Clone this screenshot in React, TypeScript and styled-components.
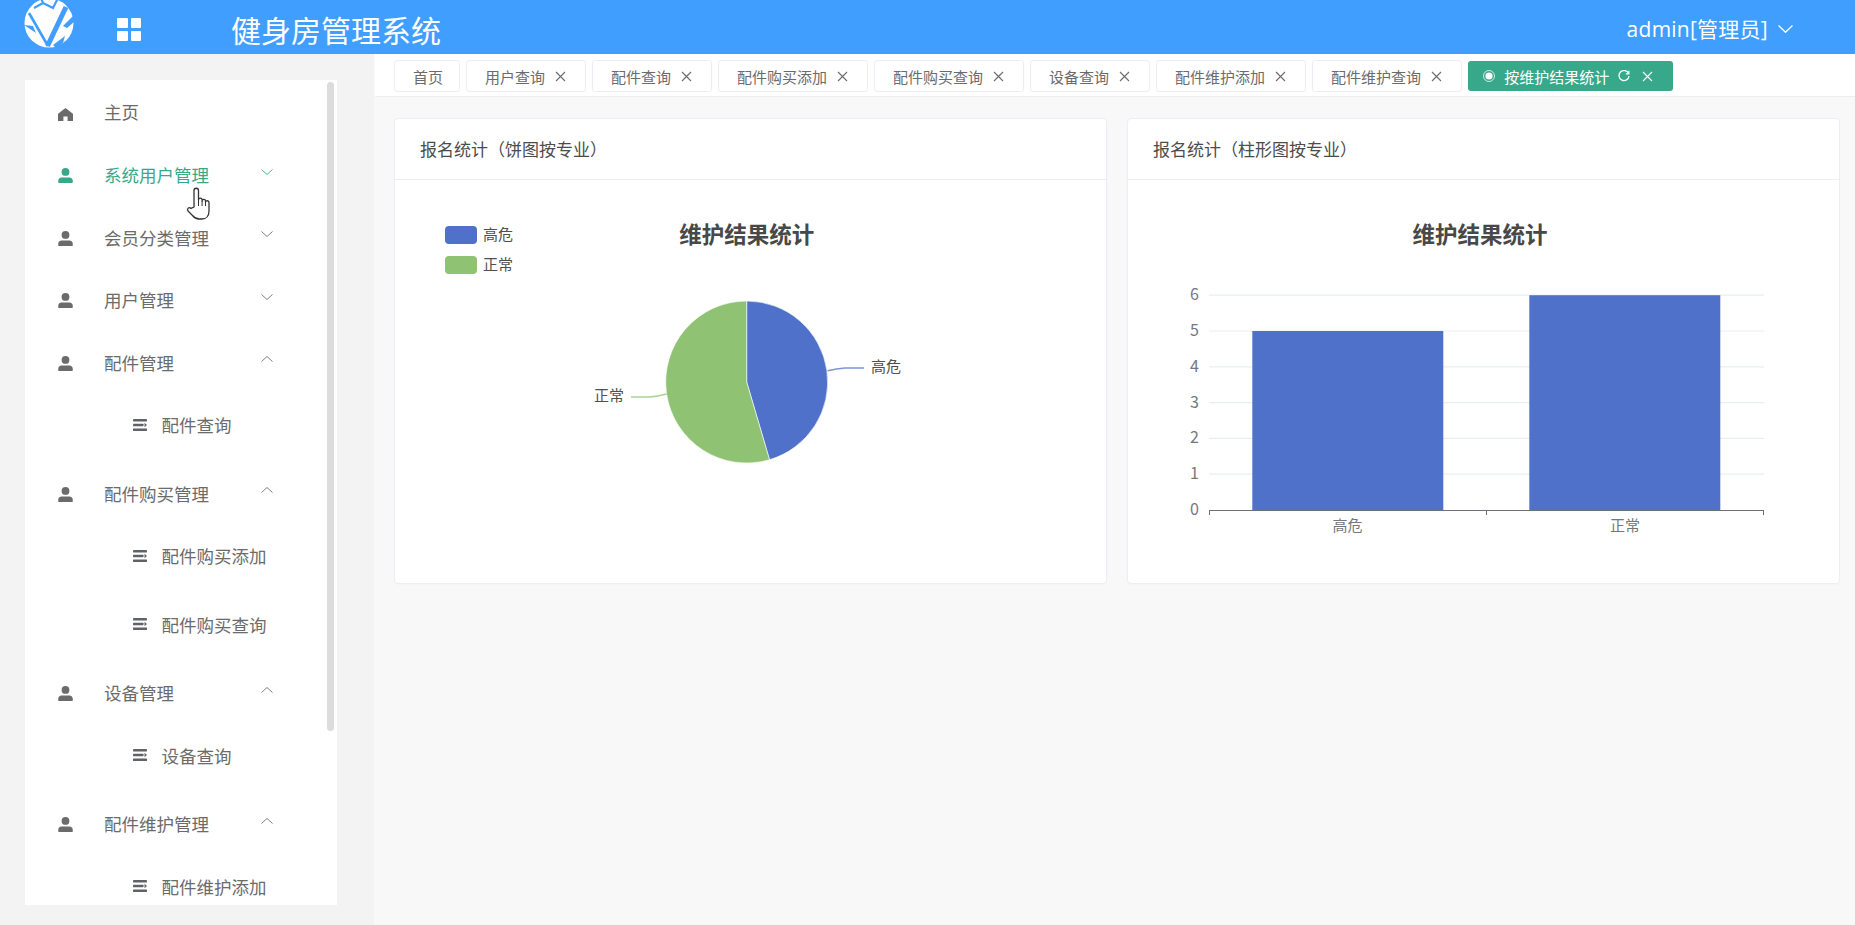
import React from "react";
import styled, { createGlobalStyle } from "styled-components";

const FONT = `"Noto Sans CJK SC", "Noto Sans", sans-serif`;
const TEAL = "#37a98a";

const Global = createGlobalStyle`
  html, body { margin: 0; padding: 0; height: 925px; overflow: hidden; background: #f8f8f8; }
  body { font-family: ${FONT}; }
  * { box-sizing: border-box; }
`;

const Page = styled.div`
  width: 1855px;
  height: 925px;
  display: grid;
  grid-template-rows: 54px 1fr;
  overflow: hidden;
  position: relative;
`;

/* ---------- header ---------- */
const Header = styled.header`
  background: #409eff;
  color: #fff;
  display: flex;
  align-items: center;
  padding: 0 62px 0 20px;
`;
const LogoSvg = styled.svg`
  width: 60px;
  height: 54px;
  flex: none;
`;
const GridIcon = styled.div`
  width: 24px;
  height: 23px;
  margin: 5px 0 0 37px;
  display: grid;
  grid-template-columns: 1fr 1fr;
  gap: 3px;
  flex: none;
`;
const GridCell = styled.span`
  background: #fff;
  border-radius: 1px;
`;
const AppTitle = styled.h1`
  margin: 4px 0 0 90px;
  font-size: 30px;
  font-weight: 400;
  line-height: 1;
  white-space: nowrap;
`;
const UserBox = styled.div`
  margin-left: auto;
  display: flex;
  align-items: center;
  gap: 10px;
  font-size: 21px;
  line-height: 1;
  padding-top: 4px;
`;
const UserName = styled.span`
  font-family: "Open Sans", ${FONT};
  letter-spacing: 0.25px;
`;

/* ---------- layout ---------- */
const Body = styled.div`
  display: grid;
  grid-template-columns: 375px 1fr;
  min-height: 0;
`;
const Aside = styled.aside`
  background: #f3f3f3;
  border-right: 1px solid #fafafa;
  padding: 26px 37px 20px 25px;
  min-height: 0;
`;
const MenuCard = styled.nav`
  position: relative;
  background: #fff;
  height: 825px;
  overflow: hidden;
  padding-top: 3.5px;
`;
const ScrollThumb = styled.div`
  position: absolute;
  left: 302px;
  top: 2px;
  width: 7px;
  height: 649px;
  border-radius: 4px;
  background: #dcdcdc;
`;
const MenuRow = styled.div<{ $active?: boolean; $home?: boolean }>`
  height: ${(p) => (p.$home ? "61px" : "62.5px")};
  display: grid;
  grid-template-columns: 33px 15px 31px 157px 12px;
  align-items: center;
  font-size: 17.5px;
  color: ${(p) => (p.$active ? TEAL : "#6b6b6b")};
  white-space: nowrap;
`;
const RowIcon = styled.svg<{ $dark?: boolean }>`
  grid-column: 2;
  width: 15px;
  height: 15px;
  fill: currentColor;
`;
const RowLabel = styled.span<{ $up?: number }>`
  grid-column: 4;
  margin-top: ${(p) => -(p.$up ?? 2)}px;
`;
const RowChevron = styled.svg`
  grid-column: 5;
  width: 12px;
  height: 6px;
  margin-top: -8px;
  fill: none;
  stroke: currentColor;
  stroke-width: 1;
  opacity: 0.85;
`;
const SubRow = styled.div`
  height: 68.5px;
  padding: 0 0 8.5px 108px;
  display: flex;
  align-items: center;
  gap: 14.5px;
  font-size: 17.5px;
  color: #6b6b6b;
  white-space: nowrap;
`;
const SubIcon = styled.svg`
  width: 14px;
  height: 12px;
  fill: #5f6368;
  flex: none;
`;
const Cursor = styled.svg`
  position: absolute;
  left: 180px;
  top: 180px;
  width: 40px;
  height: 45px;
`;

/* ---------- main ---------- */
const Main = styled.main`
  min-width: 0;
  background: #f8f8f8;
`;
const TabBar = styled.div`
  height: 43px;
  background: #fff;
  border-bottom: 1px solid #eeeeee;
  display: flex;
  align-items: flex-start;
  gap: 6px;
  padding: 6px 0 0 19px;
`;
const Tab = styled.div<{ $active?: boolean; $plain?: boolean }>`
  display: flex;
  align-items: center;
  flex: none;
  height: ${(p) => (p.$active ? "30px" : "32px")};
  margin-top: ${(p) => (p.$active ? "1px" : "0")};
  padding: ${(p) => (p.$active ? "0 20px 0 15px" : p.$plain ? "0 16px 0 18px" : "0 19px 0 18px")};
  border: ${(p) => (p.$active ? "none" : "1px solid #e9edf3")};
  border-radius: 3px;
  background: ${(p) => (p.$active ? TEAL : "#fff")};
  color: ${(p) => (p.$active ? "#fff" : "#6b6b6b")};
  font-size: 15px;
  white-space: nowrap;
`;
const TabClose = styled.svg<{ $ml?: number }>`
  width: 11px;
  height: 11px;
  margin-left: ${(p) => p.$ml ?? 10}px;
  fill: none;
  stroke: currentColor;
  stroke-width: 1.1;
  flex: none;
`;
const TabDot = styled.svg`
  width: 12px;
  height: 12px;
  margin-right: 9px;
  flex: none;
`;
const TabRefresh = styled.svg`
  width: 12px;
  height: 12px;
  margin-left: 9px;
  fill: none;
  stroke: currentColor;
  stroke-width: 1.3;
  flex: none;
`;
const CardGrid = styled.div`
  display: grid;
  grid-template-columns: 1fr 1fr;
  gap: 20px;
  padding: 21px 15px 0 19px;
`;
const Card = styled.section`
  height: 466px;
  background: #fff;
  border: 1px solid #ebeef5;
  border-radius: 4px;
  box-shadow: 0 1px 3px rgba(0, 0, 0, 0.02);
`;
const CardHead = styled.div`
  height: 61px;
  border-bottom: 1px solid #ebeef5;
  padding: 0 25px 2px;
  display: flex;
  align-items: center;
  font-size: 17px;
  color: #4c4c4c;
`;
const ChartSvg = styled.svg`
  display: block;
  width: 100%;
  height: 402px;
  font-family: ${FONT};
`;
const ChartTitle = styled.text`
  font-size: 22.5px;
  font-weight: 700;
  fill: #484848;
  text-anchor: middle;
  dominant-baseline: central;
`;
const ChartLabel = styled.text<{ $anchor?: string; $axis?: boolean; $size?: number }>`
  font-size: ${(p) => p.$size ?? 15}px;
  fill: ${(p) => (p.$axis ? "#75777f" : "#505050")};
  text-anchor: ${(p) => p.$anchor ?? "start"};
  dominant-baseline: central;
`;

/* ---------- icons ---------- */
const Person = () => (
  <RowIcon viewBox="0 0 15 15">
    <circle cx="7.5" cy="3.9" r="3.9" />
    <path d="M0.2 13.2c0-2.2 1.4-3.6 3.4-3.6h7.8c2 0 3.4 1.4 3.4 3.6v.8c0 .6-.4 1-1 1H1.2c-.6 0-1-.4-1-1z" />
  </RowIcon>
);
const Home = () => (
  <RowIcon viewBox="0 0 15 15">
    <path d="M7.5 1L14.6 6.6c.3.2.4.5.4.8V14H9.6V9.6H5.4V14H0V7.4c0-.3.1-.6.4-.8z" />
  </RowIcon>
);
const Chevron = ({ up }: { up?: boolean }) => (
  <RowChevron viewBox="0 0 12 6">
    <polyline points={up ? "0.5,5.5 6,0.5 11.5,5.5" : "0.5,0.5 6,5.5 11.5,0.5"} />
  </RowChevron>
);
const Bars = () => (
  <SubIcon viewBox="0 0 14 12">
    <rect x="0" y="0" width="14" height="2.4" rx="0.4" />
    <rect x="0" y="4.8" width="10.5" height="2.4" rx="0.4" />
    <path d="M11.5 3.8L14 6l-2.5 2.2z" />
    <rect x="0" y="9.6" width="14" height="2.4" rx="0.4" />
  </SubIcon>
);
const Logo = () => (
  <LogoSvg viewBox="0 0 60 54">
    <circle cx="29" cy="23" r="24.5" fill="#fff" />
    <g fill="none" stroke="#409eff" strokeLinejoin="miter">
      <path d="M9 13L28 46" strokeWidth="2.6" />
      <path d="M27.5 46L46 7" strokeWidth="5" />
      <path d="M14 8L23 3L33 8L38 -2M23 3L21 -2" strokeWidth="2.2" />
    </g>
    <g fill="#409eff">
      <path d="M54 15L43 26L47 28L54 22z" />
      <path d="M4 25L16 33L13 26z" />
      <path d="M33 45L45 36L43 43L36 48z" />
    </g>
  </LogoSvg>
);
const CloseX = ({ ml }: { ml?: number }) => (
  <TabClose $ml={ml} viewBox="0 0 11 11">
    <path d="M1 1L10 10M10 1L1 10" />
  </TabClose>
);

/* ---------- data ---------- */
type Item =
  | { kind: "home"; label: string }
  | { kind: "group"; label: string; open?: boolean; active?: boolean }
  | { kind: "sub"; label: string };

const MENU: Item[] = [
  { kind: "home", label: "主页" },
  { kind: "group", label: "系统用户管理", active: true },
  { kind: "group", label: "会员分类管理" },
  { kind: "group", label: "用户管理" },
  { kind: "group", label: "配件管理", open: true },
  { kind: "sub", label: "配件查询" },
  { kind: "group", label: "配件购买管理", open: true },
  { kind: "sub", label: "配件购买添加" },
  { kind: "sub", label: "配件购买查询" },
  { kind: "group", label: "设备管理", open: true },
  { kind: "sub", label: "设备查询" },
  { kind: "group", label: "配件维护管理", open: true },
  { kind: "sub", label: "配件维护添加" },
];

const TABS = [
  { label: "首页", closable: false },
  { label: "用户查询", closable: true },
  { label: "配件查询", closable: true },
  { label: "配件购买添加", closable: true },
  { label: "配件购买查询", closable: true },
  { label: "设备查询", closable: true },
  { label: "配件维护添加", closable: true },
  { label: "配件维护查询", closable: true },
];

const BLUE = "#4f71c9";
const GREEN = "#8fc373";

const PieChart = () => {
  const cx = 351.7;
  const cy = 202;
  const r = 81;
  const a = (5 / 11) * 2 * Math.PI;
  const ex = cx + r * Math.sin(a);
  const ey = cy - r * Math.cos(a);
  return (
    <ChartSvg viewBox="0 0 711 402">
      <ChartTitle x={cx} y={53}>维护结果统计</ChartTitle>
      <rect x="50" y="46" width="32" height="18" rx="4" fill={BLUE} />
      <ChartLabel x={88} y={53}>高危</ChartLabel>
      <rect x="50" y="76" width="32" height="18" rx="4" fill={GREEN} />
      <ChartLabel x={88} y={83}>正常</ChartLabel>
      <path d={`M${cx} ${cy}V${cy - r}A${r} ${r} 0 0 1 ${ex} ${ey}Z`} fill={BLUE} stroke="#fff" strokeWidth="0.6" />
      <path d={`M${cx} ${cy}L${ex} ${ey}A${r} ${r} 0 1 1 ${cx} ${cy - r}Z`} fill={GREEN} stroke="#fff" strokeWidth="0.6" />
      <path d="M432.5 190.7Q442 188.5 450 188H469" fill="none" stroke={BLUE} strokeOpacity="0.75" strokeWidth="1.4" />
      <ChartLabel x={476} y={185}>高危</ChartLabel>
      <path d="M271.7 214Q262 216.5 255 217H236" fill="none" stroke={GREEN} strokeOpacity="0.75" strokeWidth="1.4" />
      <ChartLabel x={199} y={214}>正常</ChartLabel>
    </ChartSvg>
  );
};

const BarChart = () => {
  const y0 = 330;
  const step = 35.8;
  const ticks = [0, 1, 2, 3, 4, 5, 6];
  return (
    <ChartSvg viewBox="0 0 711 402">
      <ChartTitle x={352} y={53}>维护结果统计</ChartTitle>
      {ticks.map((t) => (
        <React.Fragment key={t}>
          {t > 0 && <line x1="81" x2="636" y1={y0 - t * step} y2={y0 - t * step} stroke="#e9edf3" strokeWidth="1.2" />}
          <ChartLabel x={71} y={y0 - t * step - 2} $anchor="end" $axis $size={16}>{t}</ChartLabel>
        </React.Fragment>
      ))}
      <rect x="124.3" y={y0 - 5 * step} width="191" height={5 * step} fill={BLUE} />
      <rect x="401.3" y={y0 - 6 * step} width="191" height={6 * step} fill={BLUE} />
      <path d="M81 330.5H636M81.5 330V335M358.5 330V335M635.5 330V335" fill="none" stroke="#6e7079" strokeWidth="1" />
      <ChartLabel x={219.5} y={344} $anchor="middle" $axis>高危</ChartLabel>
      <ChartLabel x={497} y={344} $anchor="middle" $axis>正常</ChartLabel>
    </ChartSvg>
  );
};

export default function App() {
  return (
    <Page>
      <Global />
      <Header>
        <Logo />
        <GridIcon>
          <GridCell />
          <GridCell />
          <GridCell />
          <GridCell />
        </GridIcon>
        <AppTitle>健身房管理系统</AppTitle>
        <UserBox>
          <UserName>admin[管理员]</UserName>
          <svg width="15" height="8" viewBox="0 0 15 8" fill="none" stroke="#fff" strokeWidth="1.3">
            <polyline points="0.5,0.5 7.5,7.3 14.5,0.5" />
          </svg>
        </UserBox>
      </Header>
      <Body>
        <Aside>
          <MenuCard>
            {MENU.map((item) =>
              item.kind === "sub" ? (
                <SubRow key={item.label}>
                  <Bars />
                  <span>{item.label}</span>
                </SubRow>
              ) : item.kind === "home" ? (
                <MenuRow key={item.label} $home>
                  <Home />
                  <RowLabel $up={5}>{item.label}</RowLabel>
                </MenuRow>
              ) : (
                <MenuRow key={item.label} $active={item.active}>
                  <Person />
                  <RowLabel>{item.label}</RowLabel>
                  <Chevron up={item.open} />
                </MenuRow>
              )
            )}
            <ScrollThumb />
          </MenuCard>
        </Aside>
        <Main>
          <TabBar>
            {TABS.map((t) => (
              <Tab key={t.label} $plain={!t.closable}>
                {t.label}
                {t.closable && <CloseX />}
              </Tab>
            ))}
            <Tab $active>
              <TabDot viewBox="0 0 12 12">
                <circle cx="6" cy="6" r="5.5" fill="none" stroke="#fff" strokeOpacity="0.75" strokeWidth="1" />
                <circle cx="6" cy="6" r="3.6" fill="#fff" />
              </TabDot>
              按维护结果统计
              <TabRefresh viewBox="0 0 12 12">
                <path d="M10.6 3.6A5 5 0 1 0 11 6" />
                <path d="M10.9 0.8V3.9H7.8" strokeWidth="1.1" />
              </TabRefresh>
              <CloseX ml={12} />
            </Tab>
          </TabBar>
          <CardGrid>
            <Card>
              <CardHead>报名统计（饼图按专业）</CardHead>
              <PieChart />
            </Card>
            <Card>
              <CardHead>报名统计（柱形图按专业）</CardHead>
              <BarChart />
            </Card>
          </CardGrid>
        </Main>
      </Body>
      <Cursor viewBox="0 0 40 45">
        <path
          d="M14 27V10.5c0-3 4.5-3 4.5 0V20c0-2.4 3.6-2.4 3.6 0v1c0-2.2 3.4-2.2 3.4 0v1.2c0-2 3.5-2 3.5.4V31c0 5-3 8-7 8h-3c-3 0-4.5-1-6.5-3.5L8 31c-1.6-2.4 1-4.3 3-2.6z"
          fill="#fff"
          stroke="#333"
          strokeWidth="1.3"
          strokeLinejoin="round"
        />
        <path d="M18.5 20v6M22.1 21v5M25.5 22v4" fill="none" stroke="#333" strokeWidth="1" />
      </Cursor>
    </Page>
  );
}
